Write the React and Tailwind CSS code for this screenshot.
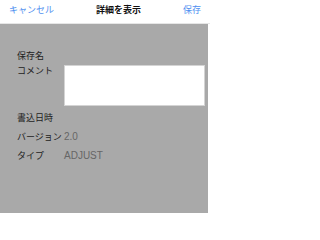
const font = { fontFamily: '"Noto Sans CJK JP", "Noto Sans", sans-serif' }

const infoRows = [
  { label: '書込日時', value: '' },
  { label: 'バージョン', value: '2.0' },
  { label: 'タイプ', value: 'ADJUST' },
]

export default function App() {
  return (
    <div className="flex h-[215px] w-[210px] flex-col bg-white" style={font}>
      <header className="flex h-[24px] shrink-0 items-center justify-between border-b border-[#e6e6e6] pl-[9px] pr-[9px] pb-[4px] text-[9px]">
        <button className="text-[#4f8ff0]">キャンセル</button>
        <h1 className="font-bold text-[#111]">詳細を表示</h1>
        <button className="text-[#4f8ff0]">保存</button>
      </header>

      <section className="mr-[2px] mb-[2px] flex flex-1 flex-col bg-[#a9a9a9] pl-[17px] pr-[3px] pt-[25px] text-[9px] leading-[14px]">
        <div className="h-[14px] text-[#222]">保存名</div>

        <div className="mt-[2px] flex">
          <div className="w-[47px] shrink-0 leading-[12px] text-[#222]">コメント</div>
          <div className="h-[41px] flex-1 border border-[#d4d4d4] bg-white" />
        </div>

        <div className="mt-[5px] flex flex-col gap-[5px]">
          {infoRows.map((row) => (
            <div key={row.label} className="flex h-[14px] items-center">
              <span className="w-[47px] shrink-0 text-[#222]">{row.label}</span>
              <span className="text-[10px] text-[#666]" style={{ fontFamily: '"Liberation Sans", sans-serif' }}>{row.value}</span>
            </div>
          ))}
        </div>
      </section>
    </div>
  )
}
